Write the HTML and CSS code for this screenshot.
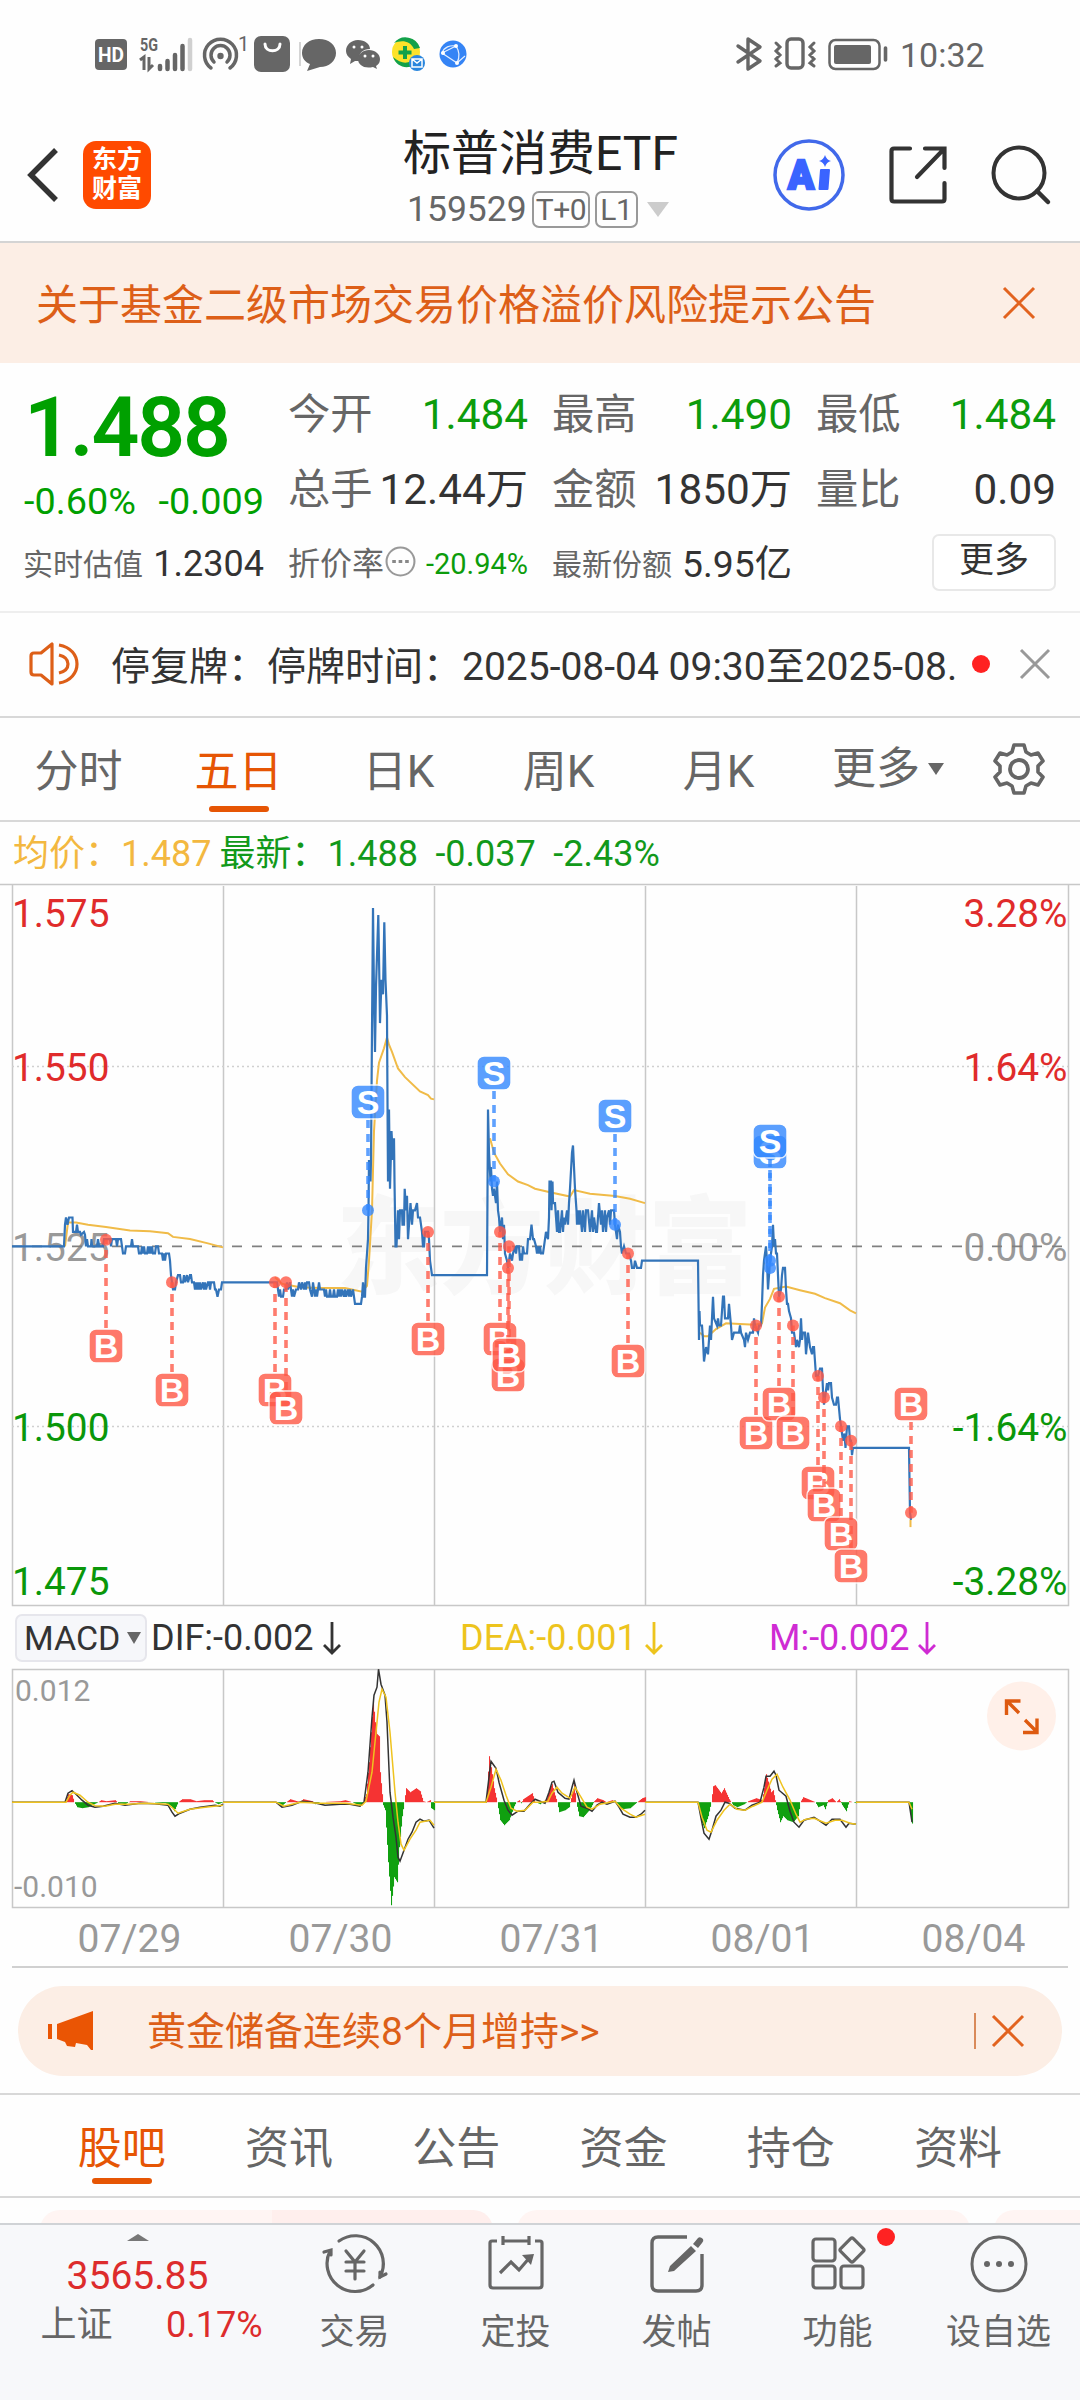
FILE: index.html
```html
<!DOCTYPE html>
<html lang="zh-CN">

<head>
    <meta charset="UTF-8" />
    <meta name="viewport" content="width=device-width, initial-scale=1.0" />
    <title>标普消费ETF</title>
    <link rel="stylesheet" href="styles.css">
</head>

<body>
    <div class="status">
        <svg class="st-hd" width="32" height="36" viewBox="0 0 32 36">
            <rect y="3" width="32" height="31" rx="4" fill="#666" />
            <text x="16" y="26" text-anchor="middle" font-size="21" font-weight="700" fill="#fff" textLength="26" lengthAdjust="spacingAndGlyphs">HD</text>
        </svg>
        <svg class="st-signal" width="54" height="36" viewBox="0 0 54 36">
            <text x="1" y="15" font-size="19" font-weight="700" fill="#666" textLength="18" lengthAdjust="spacingAndGlyphs">5G</text>
            <path d="M1 24l4-3v13M10 21v12l4-4" fill="none" stroke="#666" stroke-width="3" />
            <path d="M21 30v3M28.500 25v8M36 19v14M43.500 10v23" stroke="#666" stroke-width="4.500" stroke-linecap="round" />
            <path d="M51 4v29" stroke="#d0d0d0" stroke-width="4.500" stroke-linecap="round" />
        </svg>
        <svg class="st-hot" width="46" height="36" viewBox="0 0 46 36">
            <g fill="none" stroke="#666" stroke-width="3.500" stroke-linecap="round">
                <path d="M8 32a16 16 0 1 1 19 0" />
                <path d="M11 26a9.500 9.500 0 1 1 13 0" />
            </g>
            <circle cx="17.500" cy="20" r="3.200" fill="#666" />
            <text x="35" y="15" font-size="20" fill="#666">1</text>
        </svg>
        <svg class="st-bag" width="36" height="36" viewBox="0 0 36 36">
            <rect width="36" height="36" rx="7" fill="#666" />
            <path d="M11 8c0 9 15 9 15 0" fill="none" stroke="#fff" stroke-width="3" stroke-linecap="round" />
        </svg>
        <svg class="st-chat" width="37" height="36" viewBox="0 0 37 36">
            <path d="M1 6v24" stroke="#aaa" />
            <path d="M20 3c10 0 17 6 17 14s-7 14-16 14l-13 4 3-7c-5-2-8-6-8-11 0-8 7-14 17-14z" fill="#666" />
        </svg>
        <svg class="st-wx" width="34" height="36" viewBox="0 0 34 36">
            <path d="M12 4c7 0 12 4 12 9-7 0-12 4-11 12h-4l-5 3 1-5c-3-2-5-5-5-8 0-6 5-11 12-11z" fill="#666" />
            <path d="M23 14c6 0 11 4 11 9 0 3-1 5-4 7l1 3-4-2c-9 2-15-2-15-8 0-5 5-9 11-9z" fill="#666" />
            <g fill="#fff">
                <circle cx="8" cy="11" r="1.500" />
                <circle cx="16" cy="11" r="1.500" />
                <circle cx="19" cy="20" r="1.500" />
                <circle cx="27" cy="20" r="1.500" />
            </g>
        </svg>
        <svg class="st-360" width="36" height="36" viewBox="0 0 36 36">
            <circle cx="16" cy="16" r="14" fill="#fce22a" />
            <path d="M4 7a15 15 0 0 1 26 5l-6 1c-4-9-13-9-20-6zM3 21c7 6 13 7 18 4l3 4c-8 5-18 1-21-8z" fill="#12a14a" />
            <path d="M15 10v13M8.500 16.500h13" stroke="#12a14a" stroke-width="4" />
            <circle cx="27" cy="27" r="8" fill="#2a86dd" />
            <path d="M22 23h10v8h-10zl5 4 5-4" fill="none" stroke="#fff" stroke-width="1.500" />
        </svg>
        <svg class="st-globe" width="28" height="36" viewBox="0 0 28 36">
            <circle cx="14" cy="18" r="13.500" fill="#3584f5" />
            <path d="M17 10L3 17l15 10 8-7M17 10c4 6 4 11 1 17M3 17c2-6 8-8 14-7" fill="none" stroke="#e4efff" stroke-width="1.200" />
            <g fill="#fff">
                <circle cx="17" cy="10" r="2" />
                <circle cx="4" cy="17" r="2" />
                <circle cx="18" cy="27" r="2" />
            </g>
        </svg>
        <div class="status-right">
            <svg width="26" height="36" viewBox="0 0 26 36">
                <path d="M2 10l22 15-12 8V3l12 8L2 26" fill="none" stroke="#666" stroke-width="3.400" stroke-linejoin="round" stroke-linecap="round" />
            </svg>
            <svg width="42" height="36" viewBox="0 0 42 36">
                <g fill="none" stroke="#666" stroke-width="3.400" stroke-linecap="round">
                    <rect x="13" y="3" width="16" height="29" rx="4" />
                    <path d="M2 7l4 4-4 4 4 4-4 4 4 4-4 3M40 7l-4 4 4 4-4 4 4 4-4 4 4 3" stroke-width="3" />
                </g>
            </svg>
            <svg width="60" height="36" viewBox="0 0 60 36">
                <rect x="1.500" y="4" width="50" height="29" rx="6" fill="none" stroke="#666" stroke-width="2.500" />
                <rect x="6" y="9" width="37" height="19" rx="2" fill="#666" />
                <path d="M57.500 12v12" stroke="#666" stroke-width="3.600" stroke-linecap="round" />
            </svg>
            <span class="clock">10:32</span>
        </div>
    </div>

    <header class="header">
        <div class="header-left">
            <svg width="32" height="56" viewBox="0 0 32 56">
                <path d="M29 3L4 28l25 25" fill="none" stroke="#333" stroke-width="5.500" />
            </svg>
            <div class="logo">东方<br>财富</div>
        </div>
        <div class="title">
            <h1>标普消费ETF</h1>
            <div class="code"><span>159529</span><b class="tag">T+0</b><b class="tag">L1</b><i class="code-caret"></i></div>
        </div>
        <div class="header-right">
            <svg width="72" height="72" viewBox="0 0 72 72">
                <circle cx="36" cy="36" r="34" fill="none" stroke="#4169ea" stroke-width="3.500" />
                <text x="15" y="50" font-size="40" font-weight="900" fill="#3a64ff" stroke="#3a64ff" stroke-width="2.500" textLength="26" lengthAdjust="spacingAndGlyphs">A</text>
                <path d="M48 31h8l-1.500 19h-8z" fill="#3a64ff" stroke="#3a64ff" stroke-width="2" stroke-linejoin="round" />
                <path d="M52 16q1.500 5 6 6-4.500 1-6 6-1.500-5-6-6 4.500-1 6-6z" fill="#3a64ff" />
            </svg>
            <svg width="58" height="58" viewBox="0 0 58 58">
                <path d="M21 2.500H5q-2.500 0-2.500 2.500v48q0 2.500 2.500 2.500h48q2.500 0 2.500-2.500V37M36 2.500h19.500V22M55 3L28 31" fill="none" stroke="#333" stroke-width="4.200" stroke-linecap="round" />
            </svg>
            <svg width="60" height="60" viewBox="0 0 60 60">
                <circle cx="28" cy="28" r="25.500" fill="none" stroke="#333" stroke-width="4" />
                <path d="M46 46l11 11" stroke="#333" stroke-width="4.500" stroke-linecap="round" />
            </svg>
        </div>
    </header>

    <div class="notice">
        <span>关于基金二级市场交易价格溢价风险提示公告</span>
        <svg width="34" height="34" viewBox="0 0 34 34">
            <path d="M2 2l30 30M32 2L2 32" stroke="#e2631f" stroke-width="3" />
        </svg>
    </div>

    <section class="quote">
        <div class="price">
            <strong>1.488</strong>
            <div class="change"><span>-0.60%</span><span>-0.009</span></div>
        </div>
        <div class="cell"><label>今开</label><span class="down">1.484</span></div>
        <div class="cell"><label>最高</label><span class="down">1.490</span></div>
        <div class="cell"><label>最低</label><span class="down">1.484</span></div>
        <div class="cell"><label>总手</label><span>12.44万</span></div>
        <div class="cell"><label>金额</label><span>1850万</span></div>
        <div class="cell"><label>量比</label><span>0.09</span></div>
        <div class="cell small"><label>实时估值</label><span>1.2304</span></div>
        <div class="cell small discount">
            <label>折价率</label>
            <svg width="31" height="31" viewBox="0 0 30 30">
                <circle cx="15" cy="15" r="13.500" fill="none" stroke="#999" stroke-width="2" />
                <path d="M7 15h3.500M13.200 15h3.500M19.500 15h3.500" stroke="#888" stroke-width="3" />
            </svg>
            <span class="down">-20.94%</span>
        </div>
        <div class="cell small share"><label>最新份额</label><span>5.95亿</span></div>
        <button class="more">更多</button>
    </section>

    <div class="alert">
        <svg width="52" height="44" viewBox="0 0 52 44">
            <g fill="none" stroke="#dd5f18" stroke-width="3.200" stroke-linejoin="round">
                <path d="M23 2v40L12 33H5q-3 0-3-3V14q0-3 3-3h7z" />
                <path d="M30 3c24 4 24 34 0 38M30 13c12 3 12 15 0 18" />
            </g>
        </svg>
        <span class="alert-text">停复牌：停牌时间：2025-08-04 09:30至2025-08.</span>
        <i class="dot"></i>
        <svg class="alert-x" width="30" height="30" viewBox="0 0 30 30">
            <path d="M1 1l28 28M29 1L1 29" stroke="#999" stroke-width="3" />
        </svg>
    </div>

    <nav class="tabs">
        <a>分时</a>
        <a class="active">五日</a>
        <a>日K</a>
        <a>周K</a>
        <a>月K</a>
        <a class="tab-more">更多<i></i></a>
        <a class="gear">
            <svg width="54" height="54" viewBox="0 0 54 54">
                <path d="M22 3h10l2 7 5 3 7-2 5 8-5 5v6l5 5-5 8-7-2-5 3-2 7H22l-2-7-5-3-7 2-5-8 5-5v-6l-5-5 5-8 7 2 5-3z" fill="none" stroke="#666" stroke-width="3.600" stroke-linejoin="round" />
                <circle cx="27" cy="27" r="9" fill="none" stroke="#666" stroke-width="3.800" />
            </svg>
        </a>
    </nav>

    <div class="avg">
        <span class="avg-price">均价：1.487</span>
        <span>最新：1.488</span>
        <span>-0.037</span>
        <span>-2.43%</span>
    </div>

    <svg class="chart" width="1080" height="723" viewBox="0 884 1080 723">
        <text class="watermark" x="336" y="1285" textLength="416" lengthAdjust="spacingAndGlyphs">东方财富</text>
        <g class="frame">
            <path d="M0 884.500H1080M12.500 884V1605.500H1068.500V884M223.500 886V1605M434.500 886V1605M645.500 886V1605M856.500 886V1605" />
            <path class="dotted" d="M12 1066.500H1068M12 1426.500H1068" />
        </g>
        <g class="scale">
            <text class="up" x="12" y="927">1.575</text>
            <text class="up" x="12" y="1081">1.550</text>
            <text class="flat" x="12" y="1261">1.525</text>
            <text class="low" x="12" y="1441">1.500</text>
            <text class="low" x="12" y="1595">1.475</text>
            <g text-anchor="end">
                <text class="up" x="1067.500" y="927">3.28%</text>
                <text class="up" x="1067.500" y="1081">1.64%</text>
                <text class="flat" x="1067.500" y="1261">0.00%</text>
                <text class="low" x="1067.500" y="1441">-1.64%</text>
                <text class="low" x="1067.500" y="1595">-3.28%</text>
            </g>
        </g>
        <path class="base" d="M12 1246.300H1068" />
        <g id="avgLines"></g>
        <g id="priceLines"></g>
        <g id="marks"></g>
    </svg>

    <div class="macd-bar">
        <button>MACD<i></i></button>
        <span class="dif">DIF:-0.002<svg width="18" height="34" viewBox="0 0 18 34"><path d="M9 1v31M1 24l8 8 8-8" /></svg></span>
        <span class="dea">DEA:-0.001<svg width="18" height="34" viewBox="0 0 18 34"><path d="M9 1v31M1 24l8 8 8-8" /></svg></span>
        <span class="m">M:-0.002<svg width="18" height="34" viewBox="0 0 18 34"><path d="M9 1v31M1 24l8 8 8-8" /></svg></span>
    </div>

    <svg class="macd" width="1080" height="241" viewBox="0 1669 1080 241">
        <g class="frame">
            <path d="M12.500 1669.500H1068.500V1907.500H12.500zM223.500 1670V1907M434.500 1670V1907M645.500 1670V1907M856.500 1670V1907" />
        </g>
        <text class="limit" x="15" y="1701">0.012</text>
        <text class="limit" x="14" y="1897">-0.010</text>
        <g id="bars"></g>
        <g id="macdLines"></g>
        <circle cx="1021.500" cy="1716" r="34.500" fill="#fff0e9" />
        <path d="M1006.500 1715v-14h14M1007 1701l12 12M1023 1732.500h14v-14M1037 1732l-12-12" fill="none" stroke="#de5a10" stroke-width="3.400" />
    </svg>

    <div class="dates">
        <span>07/29</span><span>07/30</span><span>07/31</span><span>08/01</span><span>08/04</span>
    </div>

    <div class="banner">
        <svg width="46" height="40" viewBox="0 0 46 40">
            <path d="M0 13h4v15H0zM9 13L45 0v39h-2l-4-5-11-2-1 4-8-1-2-4-8-3z" fill="#ea5504" />
        </svg>
        <span>黄金储备连续8个月增持&gt;&gt;</span>
        <i></i>
        <svg width="34" height="34" viewBox="0 0 34 34">
            <path d="M2 2l30 30M32 2L2 32" stroke="#e2631f" stroke-width="3" />
        </svg>
    </div>

    <nav class="subtabs">
        <a class="active">股吧</a>
        <a>资讯</a>
        <a>公告</a>
        <a>资金</a>
        <a>持仓</a>
        <a>资料</a>
    </nav>

    <div class="cards">
        <div class="card vote"></div>
        <div class="card"></div>
        <div class="card"></div>
    </div>

    <footer class="bottom">
        <div class="index">
            <i class="index-caret"></i>
            <div class="index-value">3565.85</div>
            <div class="index-row"><span>上证</span><b>0.17%</b></div>
        </div>
        <div class="item">
            <svg width="66" height="60" viewBox="0 0 66 60">
                <g fill="none" stroke="#666" stroke-width="3.200" stroke-linecap="round">
                    <path d="M17 7a28 28 0 0 1 41 36" />
                    <path d="M51 51A28 28 0 0 1 8 17" />
                    <path d="M2 18l7-2v5M64 40l-6 3v-5" />
                    <path d="M24 17l9 11 9-11M24 28h18M24 37h18M33 28v17" />
                </g>
            </svg>
            <span>交易</span>
        </div>
        <div class="item">
            <svg width="66" height="60" viewBox="0 0 66 60">
                <path d="M14 7H9q-2 0-2 2v42q0 3 3 3h46q3 0 3-3V9q0-2-2-2h-5M20 7h26M20 2v9M46 2v9M17 39l11-11 8 8 12-14" fill="none" stroke="#666" stroke-width="3.200" />
                <path d="M39 21l12-1-3 11z" fill="#666" />
            </svg>
            <span>定投</span>
        </div>
        <div class="item">
            <svg width="66" height="60" viewBox="0 0 66 60">
                <path d="M43 3H14q-6 0-6 6v42q0 6 6 6h38q6 0 6-6V20" fill="none" stroke="#666" stroke-width="3.400" />
                <path d="M24 38l2-6 21-20 5 5-22 20zM49 10l5-6q2-2 5 1 1 2-1 4l-4 5z" fill="#666" />
            </svg>
            <span>发帖</span>
        </div>
        <div class="item">
            <svg width="66" height="60" viewBox="0 0 66 60">
                <g fill="none" stroke="#666" stroke-width="3.200">
                    <rect x="8" y="5" width="22" height="22" rx="3" />
                    <rect x="8" y="32" width="22" height="22" rx="3" />
                    <rect x="36" y="32" width="22" height="22" rx="3" />
                    <rect x="38" y="7" width="18" height="18" rx="2" transform="rotate(45 47 16)" />
                </g>
            </svg>
            <span>功能</span>
            <i class="badge"></i>
        </div>
        <div class="item">
            <svg width="66" height="60" viewBox="0 0 66 60">
                <circle cx="33" cy="30" r="27" fill="none" stroke="#666" stroke-width="3" />
                <g fill="#666">
                    <circle cx="21" cy="30" r="3" />
                    <circle cx="33" cy="30" r="3" />
                    <circle cx="45" cy="30" r="3" />
                </g>
            </svg>
            <span>设自选</span>
        </div>
    </footer>

    <script src="chart.js"></script>
</body>

</html>
```
FILE: styles.css
```css
* {
    box-sizing: border-box;
}

body {
    margin: 0;
    width: 1080px;
    height: 2400px;
    overflow: hidden;
    background-color: #fefefe;
    color: #333;
    font-family: Roboto, "Noto Sans CJK SC", sans-serif;
    font-size: 36px;
}

svg {
    display: block;
    flex: none;
    overflow: visible;
}

i {
    display: block;
    flex: none;
}

button {
    font-family: inherit;
    color: inherit;
    padding: 0;
}

/* status bar */
.status {
    display: flex;
    height: 110px;
    padding: 36px 0 0 95px;
    color: #666;
}

.st-signal { margin-left: 12px; }
.st-hot { margin-left: 10px; }
.st-bag { margin-left: 5px; }
.st-chat { margin-left: 9px; }
.st-wx { margin-left: 10px; }
.st-360 { margin-left: 10px; }
.st-globe { margin-left: 13px; }

.status-right {
    display: flex;
    gap: 12px;
    margin-left: auto;
    padding-right: 95px;
}

.clock {
    font-size: 34px;
    line-height: 38px;
    width: 85px;
}

/* header */
.header {
    display: grid;
    grid-template-columns: 1fr 280px 1fr;
    height: 133px;
    border-bottom: 2px solid #d4d4d4;
}

.header-left {
    display: flex;
    align-items: center;
    padding: 0 0 1px 27px;
    gap: 24px;
}

.logo {
    width: 68px;
    height: 68px;
    border-radius: 13px;
    background-color: #ff4a00;
    color: #fff;
    font-size: 25px;
    font-weight: 700;
    line-height: 29px;
    padding-top: 4px;
    text-align: center;
}

.title {
    text-align: center;
}

.title h1 {
    margin: 14px 0 0;
    padding-left: 1px;
    font-size: 48px;
    font-weight: 400;
    line-height: 60px;
    color: #222;
    white-space: nowrap;
}

.code {
    display: flex;
    align-items: center;
    height: 50px;
    padding-left: 7px;
    font-size: 35.5px;
    color: #666;
}

.tag {
    height: 37px;
    margin-left: 5px;
    padding: 0 2px;
    border: 2px solid #999;
    border-radius: 7px;
    font-size: 30px;
    font-weight: 400;
    line-height: 34px;
    letter-spacing: -0.4px;
}

.tag + .tag {
    padding: 0 3px;
}

.code-caret {
    margin-left: 9px;
    border: 11px solid transparent;
    border-top: 15px solid #ccc;
    border-bottom: 0;
}

.header-right {
    display: flex;
    align-items: center;
    justify-content: flex-end;
    gap: 44px;
    padding: 0 29px 1px 0;
}

/* notice */
.notice {
    display: flex;
    align-items: center;
    justify-content: space-between;
    height: 120px;
    padding: 0 44px 0 36px;
    background-color: #fceee5;
    color: #dd5f18;
    font-size: 42px;
}

.notice span {
    margin-top: -3px;
}

/* quote */
.quote {
    display: grid;
    grid-template-columns: 240px 239px 239px 239px;
    grid-template-rows: 75px 75px 75px;
    column-gap: 25px;
    height: 250px;
    padding: 14px 24px 0;
    border-bottom: 2px solid #eee;
}

.price {
    grid-row: 1 / 3;
    color: #00a000;
}

.price strong {
    display: block;
    font-size: 84px;
    font-weight: 600;
    line-height: 101px;
    height: 98px;
    letter-spacing: -2.2px;
}

.change {
    display: flex;
    justify-content: space-between;
    font-size: 37.8px;
    line-height: 52px;
}

.cell {
    display: flex;
    align-items: center;
    justify-content: space-between;
    font-size: 42.3px;
    line-height: 75px;
    white-space: nowrap;
}

.cell label {
    margin-left: -1px;
    color: #666;
}

.cell .down {
    color: #0c9c0c;
}

.cell.small {
    font-size: 36px;
}

.cell.share {
    font-size: 37.3px;
}

.small label {
    font-size: 30px;
}

.discount label {
    font-size: 32px;
}

.discount svg {
    margin-top: -7px;
}

.discount .down {
    margin-left: 8px;
    font-size: 29px;
}

.more {
    justify-self: end;
    align-self: center;
    width: 124px;
    height: 57px;
    margin-top: -5px;
    padding-bottom: 2px;
    border: 2px solid #e8e8e8;
    border-radius: 7px;
    background-color: #fff;
    font-size: 35px;
    line-height: 48px;
}

/* alert */
.alert {
    display: flex;
    align-items: center;
    height: 105px;
    padding: 0 0 2px 29px;
    border-bottom: 2px solid #d8d8d8;
}

.alert-text {
    width: 891px;
    margin-top: -2px;
    padding-left: 30px;
    font-size: 39px;
    white-space: nowrap;
}

.dot {
    width: 18px;
    height: 18px;
    border-radius: 50%;
    background-color: #f22;
}

.alert-x {
    margin-left: 30px;
}

/* tabs */
.tabs {
    display: flex;
    height: 104px;
    border-bottom: 2px solid #d8d8d8;
    color: #666;
    font-size: 44px;
    line-height: 109px;
}

.tabs a {
    position: relative;
    width: 160px;
    padding-right: 3px;
    text-align: center;
}

.tabs .active,
.subtabs .active {
    color: #e65504;
}

.tabs .active::after,
.subtabs .active::after {
    content: "";
    position: absolute;
    left: 50%;
    bottom: 8px;
    width: 60px;
    height: 6px;
    margin-left: -31px;
    border-radius: 3px;
    background-color: #e65504;
}

.subtabs .active::after {
    bottom: 12px;
    margin-left: -30px;
}

.tabs .tab-more {
    display: flex;
    align-items: center;
    width: 178px;
    padding-left: 32px;
}

.tab-more i {
    margin-left: 8px;
    border: 8px solid transparent;
    border-top: 12px solid #666;
    border-bottom: 0;
}

.tabs .gear {
    display: flex;
    align-items: center;
    width: 80px;
    padding-left: 14px;
}

.avg {
    display: flex;
    height: 62px;
    padding-left: 13px;
    color: #12991a;
    line-height: 65px;
    white-space: nowrap;
}

.avg span {
    margin-right: 17.5px;
}

.avg .avg-price {
    margin-right: 8px;
    color: #f3b840;
}

/* charts */
.frame path {
    fill: none;
    stroke: #c8c8c8;
    stroke-width: 1.5;
}

.frame .dotted {
    stroke: #d0d0d0;
    stroke-dasharray: 2 3;
}

.watermark {
    font-size: 106px;
    font-weight: 900;
    fill: #f7f7f7;
}

.scale {
    font-size: 38.8px;
}

.scale .up { fill: #e02b2b; }
.scale .flat { fill: #999; }
.scale .low { fill: #0a970a; }

.base {
    stroke: #808080;
    stroke-width: 1.8;
    stroke-dasharray: 10 10;
}

.line-price {
    fill: none;
    stroke: #3374b9;
    stroke-width: 2.2;
}

.line-avg {
    fill: none;
    stroke: #f0bb48;
    stroke-width: 2;
}

.mark {
    fill: #ff5846;
    stroke: #ff5846;
}

.mark.sell {
    fill: #3388ff;
    stroke: #3388ff;
}

.mark line {
    stroke-width: 3.6;
    stroke-dasharray: 8 6;
    opacity: 0.78;
}

.mark circle {
    stroke: none;
    opacity: 0.8;
}

.mark rect {
    stroke: #fff;
    stroke-width: 1.4;
    opacity: 0.8;
}

.mark text {
    fill: #fff;
    stroke: none;
    font-family: "Liberation Sans", sans-serif;
    font-size: 34px;
    font-weight: 700;
    text-anchor: middle;
}

.macd-bar {
    display: grid;
    grid-template-columns: 136px 309px 309px 1fr;
    align-items: center;
    height: 62px;
    padding-left: 15px;
}

.macd-bar button {
    display: flex;
    align-items: center;
    width: 132px;
    height: 48px;
    padding-left: 7px;
    border: 2px solid #e6e6ec;
    border-radius: 7px;
    background-color: #f6f7fa;
    font-size: 34px;
}

.macd-bar button i {
    margin-left: 7px;
    border: 7.5px solid transparent;
    border-top: 12px solid #666;
    border-bottom: 0;
}

.macd-bar span {
    display: flex;
    align-items: center;
    gap: 8px;
}

.macd-bar path {
    fill: none;
    stroke: currentColor;
    stroke-width: 2.8;
}

.macd-bar .dif { gap: 10px; }
.macd-bar .dea { color: #edc41d; }
.macd-bar .m { color: #cf2bd3; }

.limit {
    font-size: 30px;
    fill: #999;
}

.bar-up { fill: #f53333; }
.bar-down { fill: #10a010; }

.line-dif,
.line-dea {
    fill: none;
    stroke-width: 1.5;
}

.line-dif { stroke: #333; }
.line-dea { stroke: #efc31f; }

.dates {
    display: grid;
    grid-template-columns: repeat(5, 211px);
    height: 58px;
    margin: 0 12px;
    padding-left: 12px;
    border-bottom: 2px solid #d0d0d0;
    color: #999;
    font-size: 39px;
    line-height: 58px;
    text-align: center;
    white-space: nowrap;
}

/* banner */
.banner {
    display: flex;
    align-items: center;
    height: 90px;
    margin: 18px 18px 17px;
    padding: 0 37px 0 30px;
    border-radius: 45px;
    background-color: #fceee5;
    color: #dd5f18;
    font-size: 39px;
}

.banner span {
    flex: 1;
    margin-top: -6px;
    padding-left: 53px;
}

.banner i {
    width: 2px;
    height: 36px;
    margin-right: 15px;
    background-color: #d98a5a;
}

.subtabs {
    display: grid;
    grid-template-columns: repeat(6, 167.3px);
    height: 105px;
    padding-left: 38px;
    border-top: 2px solid #d8d8d8;
    border-bottom: 2px solid #d8d8d8;
    color: #666;
    font-size: 44px;
    line-height: 108px;
    text-align: center;
}

.subtabs a {
    position: relative;
    height: 101px;
}

.cards {
    display: flex;
    gap: 24px;
    height: 25px;
    padding: 12px 0 0 40px;
    overflow: hidden;
}

.card {
    flex: none;
    width: 453px;
    height: 60px;
    border-radius: 20px;
    background-color: #fff5f3;
}

.vote {
    background-image: linear-gradient(90deg, #fff5f3 232px, #ffefed 232px);
}

/* bottom bar */
.bottom {
    display: grid;
    grid-template-columns: 274px repeat(5, 161px);
    height: 177px;
    border-top: 2px solid #d0d3d6;
    background-color: #f7f8fa;
    color: #666;
}

.index {
    display: flex;
    flex-direction: column;
    align-items: center;
    padding: 9px 0 0 1px;
}

.index-caret {
    border: 11px solid transparent;
    border-bottom: 7px solid #777;
    border-top: 0;
}

.index-value {
    margin-top: 8px;
    color: #dd2c2c;
    font-size: 39px;
    line-height: 54px;
}

.index-row {
    display: flex;
    justify-content: space-between;
    width: 222px;
    margin-left: 28px;
    line-height: 44px;
}

.index-row b {
    color: #dd2c2c;
    font-weight: 400;
}

.item {
    position: relative;
    display: flex;
    flex-direction: column;
    align-items: center;
    padding-top: 9px;
}

.item span {
    margin-top: 14px;
    font-size: 35px;
    line-height: 50px;
}

.badge {
    position: absolute;
    left: 120px;
    top: 3px;
    width: 18px;
    height: 18px;
    border-radius: 50%;
    background-color: #f22;
}
```
FILE: chart.js
```js
const NS = "http://www.w3.org/2000/svg";
const BASE = 1246.3; // y of 1.525
const TICK = 7.2;    // pixels for 0.001
const ZERO = 1802.2; // MACD zero line

// x, ticks away from the previous close
const price = [
    "12,0 64,0 65,3 66,4 67.5,3 69,4 72.5,4 73,2 76,2 77,3 78,2 80,2 81,1.6 84,2 85,1.6 86,0 87,1 88,0 91,0 91.5,1 92,0 97,0 98,1 99,0 103,0 104,1 110,1 111,0 112,1 116,1 117,0 118,1 121,1 122,0 123,-1 125,-1 126,0 131,0 132,1 133,0 138,0 139,-1 141,-1 142,0 143,-1 144,0 145,-1 147,-1 148,0 149,-1 150,0 151,-1 152,0 153,-1 155,-1 156,0 158,0 159,-1 162,-1 163,-2 164,-1 165,-2 166,-1 169,-1 170,-2 171,-4 172,-5 173,-6 175,-6 176,-5 178,-4 180,-4 181,-5 183,-5 184,-4 185,-5 187,-4 188,-5 190,-4 191,-4 192,-5 194,-5 195,-6 196,-5 197,-6 198,-5 199,-6 200,-5 201,-6 203,-5 204,-6 205,-5 206,-6 208,-5 209,-5 210,-6 211,-5 214,-5 215,-6 216,-6 217.500,-7 219,-6 221,-6 222,-5 275,-5 277,-5 278,-6 279,-7 280,-6 281,-7 283,-7 284,-6 286,-6 287,-5 288,-6 290,-5 291,-6 292,-7 293,-6 294,-7 296,-6 298,-6 299,-5 301,-6 302,-5 304,-6 305,-5 306,-6 307,-5 309,-5 310,-6 312,-7 313,-5 314,-6 315,-7 316,-6 317,-7 319,-5 320,-6 324,-6 325,-7 326,-6 327,-7 329,-7 330,-6 331,-7 333,-7 334,-6 335,-7 337,-7 338,-6 339,-7 340,-6 341,-7 342,-6 344,-7 345,-6 346,-7 348,-6 349,-7 350,-6 351,-7 353,-6 354,-7 355,-8 361,-8 362,-7 363,-5 364,-7 365,-7 366,-3 367,-1 368,1 368.5,5 369,12 370.500,9 371,12 372,30 373,47 374,35 375,27 376,36 378.300,46 379.500,36 380,31 381.500,37 383,35 384.300,45 385.500,37 387,32 387.500,20 388,9 389,19 390,8 391.500,16 393,12 394,15 394.500,9 395.500,0 396.500,0 398,5 399,1 400,5 402,5 402.500,3 404,3 404.700,8 406,5 407,7 408,1 410.500,6 412,3 413,5 415,5 417,6 418,4 420,4 422,2 423,0 424,0 425,2 428,2 429,1 430,-2 432,-4 487,-4 488,19 489,13 490.500,9 491,11 492,8 493,7 494,8 495,7 496,6 497,9 498,5 499,4 500,2 502,4 503,1 504,3 505,-1 507,-2 508,-3 510,-1 512,-2 513,-1 515,0 516,-1 517,0 519,0 520,-2 521,-1 522,-2 523,0 524,-1 527,-1 528,1 530,1 531.500,3 533,1 534,1 536,0 537,-1 538,0 539,-1 540,0 541,-1 543,-1 544,0 546,2 548,1 549,4 549.500,9 551,9 551.500,5 552.500,9 553,6 555,6 556,4 557,2 558,5 559,2 560,2 562,5 563,2 564,4 565,3 567,5 568,3 569,6 570,8 572,13 573,14 575,8 576.500,5 577,3 578,5 579,3 580,5 582,2 583,5 585,2 586,5 588,5 590,2 592,5 593,2 594,4 596,2 597,2 599,6 601,3 602,5 603,2 605,5 606,2 607,4 609,5 610,3 611,5 614,5 615,3 616,2 617,1 618,3 620,2 621,0 622,-1 624,0 626,-1 629,-1 631,-2 632,-3 634,-3 635,-2 637,-3 641,-3 642,-2 697,-2 698,-2 699,-13 699.500,-9 700,-11 702,-11 703,-13 704,-16 706,-14 708,-15 710,-11 711,-13 713,-7 714,-10 717,-11 718,-10 719,-11 721,-11 723,-7 724,-7 725,-10 728,-10 729,-8 731,-11 732,-13 734,-12 739,-12 740,-11 741,-12 744,-13 745,-14 746,-12 748,-13 750,-12 753,-12 754,-10 755,-11 758,-12 759,-11 761,-11 762,-8 763,-4 764,-2 765,-1 766,0 767,-2 768,-6 769,-4 770,-2 772,0 773,3 774,0 775,1 776,-1 777,-1 778,-4 779,-7 781,-6 782,-4 783,-3 785,-3 786,-6 787,-8 788,-8 789,-9 791,-10 792,-12 794,-12 795,-13 796,-14 797,-13 799,-14 800,-13 801,-10 802,-13 803,-12 805,-12 806,-15 808,-12 810,-14 812,-15 813,-14 814,-14 815,-16 816,-18 818,-18 820,-17 822,-17 823,-20 824,-22 826,-20 827,-19 828,-20 829,-19 831,-19 832,-21 834,-22 836,-22 837,-21 838,-21 840,-24 841,-25 843,-27 844.500,-26 845.500,-28 847,-25 849,-25 850,-27 851,-27 852,-29 853,-28 909,-28 910,-37 911,-38"
];

const average = [
    "65,0 68,3.3 76,3.3 88,3 106,2.7 130,2.2 150,2.1 168,1.8 173,1.3 190,1 208,.4 223,-.15",
    "275,-4.3 282,-5.2 300,-5.7 320,-5.8 345,-5.8 362,-6.3 367,-5.5 369,-2 372,5 374,16 377,23 379,25.5 384,27.5 387,29 389,28 392,27 398,24.7 405,23.5 420,21.5 428,21 431,20.500 434,20.4",
    "490,15 494,13 500,11.5 508,10 518,9 528,8.5 535,8 550,7.5 570,6.9 574,7.8 590,7.3 615,7 630,6.6 645,6",
    "700,-12 704,-12.5 708,-12.5 716,-11.5 726,-10.7 740,-10.8 755,-10.9 762,-10.7 765,-8.5 770,-7.3 774,-5.9 786,-5.6 800,-6.1 815,-6.6 825,-7.2 840,-7.9 850,-8.9 856,-9.3",
    "910.5,-38 910.5,-39"
];

// type, x, tick of the trade, y of the label
const marks = [
    ["B", 106, 0.9, 1346], ["B", 172, -5, 1390], ["B", 275, -5, 1390], ["B", 286, -5, 1408],
    ["S", 368, 5, 1102], ["B", 428, 2, 1339], ["S", 494, 9, 1073], ["B", 500, 2, 1339],
    ["B", 508, -3, 1375], ["B", 509, 0, 1355], ["S", 615, 3, 1116], ["B", 628, -1, 1361],
    ["B", 756, -11, 1433], ["S", 770, -3, 1152], ["S", 770, -2, 1141], ["B", 779, -7, 1404],
    ["B", 793, -11, 1433], ["B", 818, -18, 1483], ["B", 824, -21, 1505], ["B", 841, -25, 1534],
    ["B", 851, -27, 1566], ["B", 911, -37, 1404]
];

const dif = "12,0 65,0 68,9 72,11.5 76,8 82,2 88,-3 95,-5 103,-4 115,-1 125,-3 140,-1 155,-1.5 168,-3 172,-10 175,-14 180,-11 190,-7 200,-5 215,-3 220,-4 223,-2|223,0 276,0 282,-5 292,-3 302,1 312,0 325,-3 340,-2 350,-2 360,-4 364,0 368,30 372,85 374,107 377,115 378.5,133 381,118 385,107 387,80 390,10 393,-15 396,-35 398,-55 400,-59 404,-48 408,-37 412,-30 416,-20 420,-17 424,-19 429,-18 434,-26|434,0 486,0 489,25 491,41 496,34 499,20 504,2 508,-8 512,-13 518,-9 524,-9 530,-2 535,3 540,1 545,-1 549,10 552,20 554,21 558,10 565,4 569,3 572,15 574,22 577,10 581,-4 587,-6 592,-9 597,-3 602,0 607,-2 615,1 619,-5 623,-12 630,-15 636,-15 641,-12 645,-8|645,0 698,0 701,-16 704,-31 709,-37 712,-28 716,-14 721,-8 725,0 729,-1 735,-6 745,-8 752,-3 760,0 764,15 766,26 770,26 774,31 776,27 779,12 786,6 790,-9 794,-20 799,-25 804,-18 814,-15 820,-19 826,-23 832,-17 840,-17 846,-25 849,-21 856,-22|856,0 909,0 912,-20";
const dea = "12,0 66,0 70,7 73,10 80,7 88,0 95,-3.5 105,-4 115,-2 128,-2 145,-1 168,-2 173,-6 178,-11 190,-7 205,-5 223,-3|223,0 276,0 284,-4 300,0 320,-1 345,-1 362,-3 366,1 372,30 376,70 379,100 382,113 386,105 390,70 395,10 398,-20 401,-42 404,-48 410,-37 416,-28 420,-20 425,-19 430,-18 434,-23|434,0 486,0 491,15 496,33 501,22 506,7 511,-6 517,-9 525,-8 533,0 540,0 548,1 552,9 557,15 562,9 570,4 575,15 581,5 587,-5 592,-7 600,-2 615,1 621,-6 630,-12 636,-15 645,-12|645,0 698,0 702,-15 707,-28 711,-30 717,-18 724,-8 730,-2 737,-7 745,-8 753,-4 762,0 767,12 772,23 777,28 783,15 790,2 796,-12 800,-20 806,-17 814,-16 826,-21 835,-18 842,-18 850,-21 856,-22|856,0 909,0 912,-7";
const hist = "65,0 68,8 72,7 74,0 77,-5 82,-6 88,-5 96,-1 98,0 101,2 106,1 115,2 118,-1 125,-2 130,1 140,1 150,0 165,-1 171,-4 174,-9 178,0 182,3 190,3 196,1 204,2 212,2 214,0 218,-2 223,0 276,0 281,-4 286,0 290,3 300,0 303,3 312,1 315,-2 320,0 340,1 345,2 352,0 360,-4 363,0 366,8 369,40 371,70 373,101 375,80 377,68 379,66 380,30 383,-3 385,-8 388,-60 391,-103 394,-75 397,-80 399,-45 402,-14 404,0 406,14 410,10 416,14 420,11 423,1 426,0 430,2 431,-6 434,-8 435,0 486,0 489,46 491,35 494,14 497,0 500,-18 504,-23 509,-18 514,-4 516,0 519,2 521,-1 523,3 532,9 535,0 540,-2 547,4 549,13 552,18 554,10 557,0 559,-10 565,-8 569,-5 571,4 574,18 576,0 579,-14 583,-15 590,-7 594,1 597,4 603,2 606,0 612,2 616,0 622,-7 630,-6 637,0 642,4 645,5 646,0 698,0 701,-18 704,-26 708,-14 711,0 713,16 715,17 721,9 724,14 729,3 733,-3 737,-5 744,-2 748,1 756,4 762,2 764,14 766,28 769,17 771,10 773,12 775,2 777,-8 780,-20 783,-14 787,-18 793,-20 798,-14 800,0 803,5 808,3 815,0 818,-5 823,-3 825,-7 828,2 832,4 836,0 839,3 842,-3 846,-9 849,1 856,-1 857,0 908,0 910,-12 913,-26";

function add(parent, tag, attrs, text) {
    const el = document.createElementNS(NS, tag);
    for (const key in attrs) el.setAttribute(key, attrs[key]);
    if (text) el.textContent = text;
    parent.appendChild(el);
    return el;
}

function parse(str) {
    return str.split(" ").map((p) => p.split(",").map(Number));
}

function drawLine(id, str, cls, base, unit) {
    const points = parse(str).map(([x, v]) => x + "," + (base - v * unit).toFixed(1)).join(" ");
    add(document.getElementById(id), "polyline", { class: cls, points });
}

average.forEach((s) => drawLine("avgLines", s, "line-avg", BASE, TICK));
price.forEach((s) => drawLine("priceLines", s, "line-price", BASE, TICK));

// buy / sell labels
marks.forEach(([type, x, tick, ly]) => {
    const y = BASE - tick * TICK;
    const g = add(document.getElementById("marks"), "g", { class: type === "S" ? "mark sell" : "mark" });
    add(g, "line", { x1: x, x2: x, y1: ly > y ? ly - 18 : ly + 18, y2: y });
    add(g, "circle", { cx: x, cy: y, r: 6 });
    add(g, "rect", { x: x - 17, y: ly - 17, width: 34, height: 34, rx: 7 });
    add(g, "text", { x, y: ly + 12 }, type);
});

// MACD columns
const columns = parse(hist);
let k = 0;
for (let x = 65; x < 913; x += 1) {
    while (k < columns.length - 2 && columns[k + 1][0] <= x) k++;
    const [x0, v0] = columns[k];
    const [x1, v1] = columns[k + 1];
    const v = v0 + (v1 - v0) * Math.max(0, x - x0) / (x1 - x0);
    if (Math.abs(v) < 0.3) continue;
    add(document.getElementById("bars"), "rect", {
        class: v > 0 ? "bar-up" : "bar-down",
        x,
        y: v > 0 ? ZERO - v : ZERO,
        width: 1.05,
        height: Math.abs(v)
    });
}
dif.split("|").forEach((s) => drawLine("macdLines", s, "line-dif", ZERO, 1));
dea.split("|").forEach((s) => drawLine("macdLines", s, "line-dea", ZERO, 1));
```
